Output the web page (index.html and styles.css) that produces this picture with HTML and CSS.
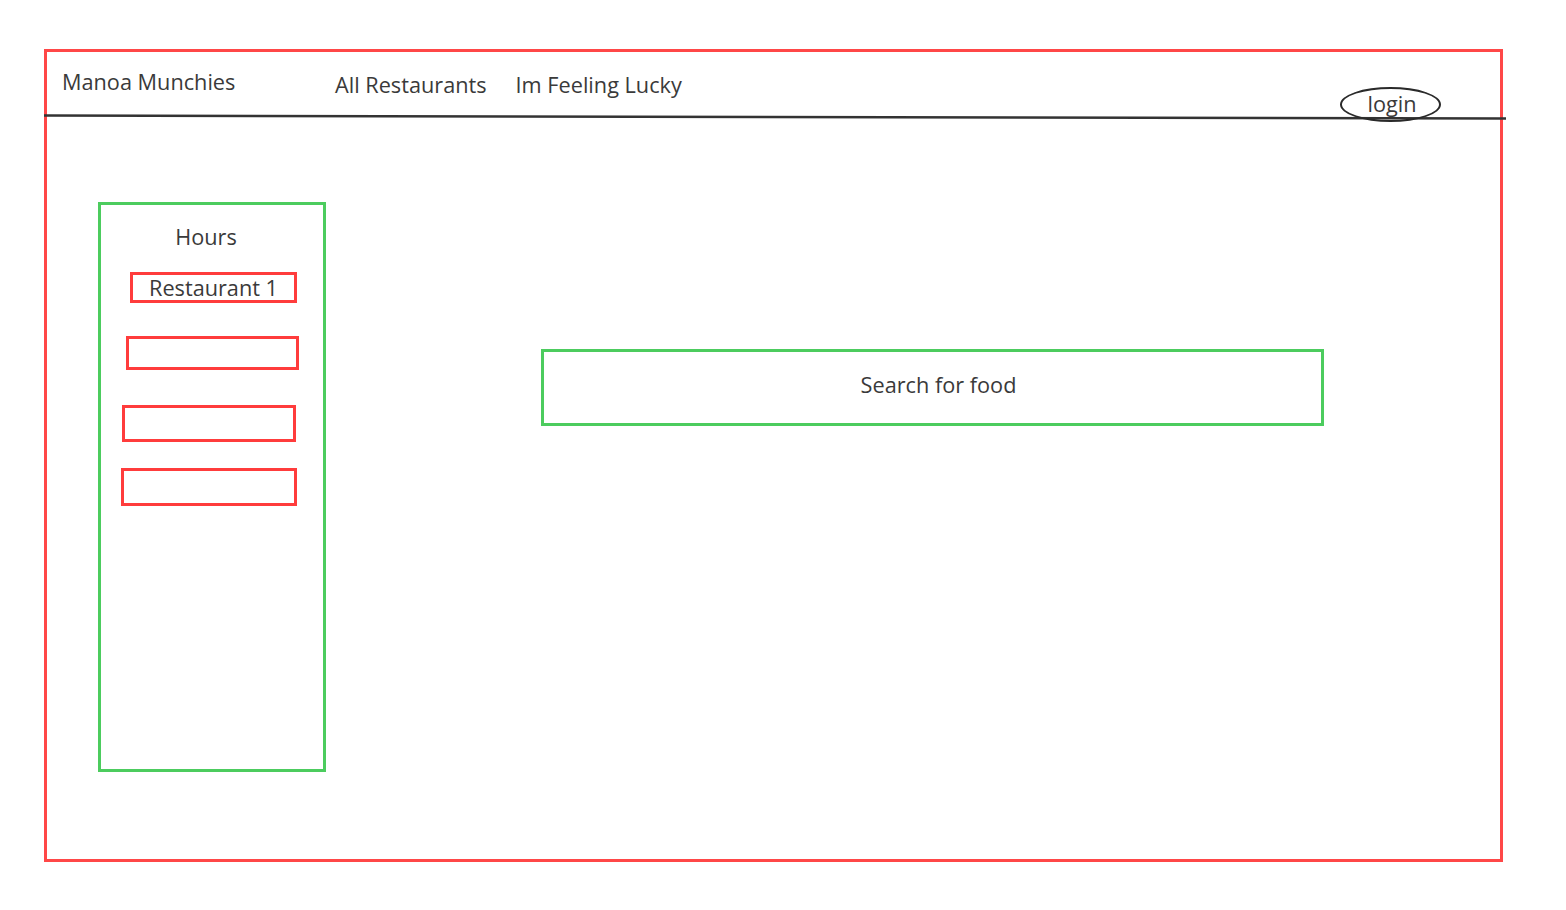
FILE: index.html
```html
<!DOCTYPE html>
<html lang="en">
<head>
<meta charset="utf-8">
<title>Manoa Munchies</title>
<link rel="stylesheet" href="styles.css">
</head>
<body>
<div class="frame">
  <header class="header">
    <div class="brand">Manoa Munchies</div>
    <nav class="nav">
      <span class="nav-link">All Restaurants</span>
      <span class="nav-link">Im Feeling Lucky</span>
    </nav>
    <div class="login">login</div>
  </header>
  <svg class="rule" width="1462" height="6" viewBox="0 0 1462 6"><line x1="0" y1="1.5" x2="1462" y2="4.5" stroke="#333" stroke-width="2.5"/></svg>
  <main class="content">
    <aside class="sidebar">
      <div class="sidebar-title">Hours</div>
      <div class="hour-box hb1">Restaurant 1</div>
      <div class="hour-box hb2"></div>
      <div class="hour-box hb3"></div>
      <div class="hour-box hb4"></div>
    </aside>
    <div class="search">Search for food</div>
  </main>
</div>
</body>
</html>
```
FILE: styles.css
```css
* { box-sizing: border-box; }
html, body { margin: 0; padding: 0; background: #fff; }
body {
  font-family: "Open Sans", "Noto Sans", sans-serif;
  color: #3a3a3a;
  width: 1566px;
  height: 910px;
  overflow: hidden;
}
.frame {
  margin: 49px 0 0 44px;
  width: 1459px;
  height: 813px;
  border: 3px solid #ff4747;
}
.header {
  display: flex;
  align-items: flex-start;
  height: 62px;
  padding-left: 15px;
}
.brand {
  font-size: 21.7px;
  line-height: 28px;
  margin-top: 16px;
  width: 273px;
}
.nav {
  display: flex;
  gap: 29px;
  margin-top: 19px;
}
.nav-link {
  font-size: 21.7px;
  line-height: 28px;
}
.login {
  margin-left: auto;
  margin-right: 59px;
  margin-top: 35px;
  width: 101px;
  height: 35px;
  border: 2.5px solid #2a2a2a;
  border-radius: 50%;
  font-size: 21.7px;
  line-height: 29px;
  text-align: center;
  position: relative;
  z-index: 1;
  padding-left: 3px;
}
.rule {
  display: block;
  margin-left: -3px;
  overflow: visible;
}
.content {
  display: flex;
  align-items: flex-start;
}
.sidebar {
  margin-left: 51px;
  margin-top: 82px;
  width: 228px;
  height: 570px;
  border: 3px solid #4ccc5e;
  padding-top: 18px;
}
.sidebar-title {
  font-size: 21.7px;
  line-height: 28px;
  text-align: center;
  padding-right: 12px;
}
.hour-box {
  border: 3px solid #ff3c3c;
  font-size: 21.7px;
  line-height: 25px;
  text-align: center;
}
.hb1 { margin: 21px 0 0 29px; width: 167px; height: 31px; }
.hb2 { margin: 33px 0 0 25px; width: 173px; height: 34px; }
.hb3 { margin: 35px 0 0 21px; width: 174px; height: 37px; }
.hb4 { margin: 26px 0 0 20px; width: 176px; height: 38px; }
.search {
  margin-left: 215px;
  margin-top: 229px;
  width: 783px;
  height: 77px;
  border: 3px solid #4ccc5e;
  font-size: 21.7px;
  line-height: 28px;
  padding-top: 19px;
  text-align: center;
  padding-left: 12px;
}
```
